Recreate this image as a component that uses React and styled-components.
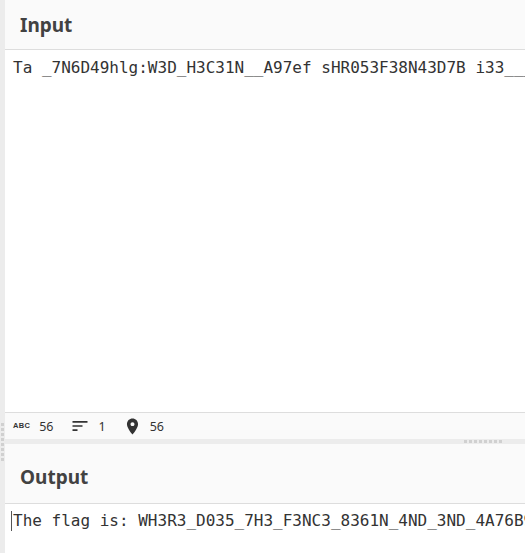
import React from 'react';
import styled, { createGlobalStyle } from 'styled-components';

const Global = createGlobalStyle`
  html, body {
    margin: 0;
    padding: 0;
    overflow: hidden;
    background: #fff;
  }
`

const Page = styled.div`
  display: flex;
  height: 553px;
  width: 525px;
  overflow: hidden;
`

const Gutter = styled.div`
  width: 5px;
  flex-shrink: 0;
  background: #ececec;
  display: flex;
  flex-direction: column;
  align-items: center;
  gap: 2px;
  padding-top: 423px;
  box-sizing: border-box;
`

const Dot = styled.span`
  display: block;
  width: 3px;
  height: 3px;
  background: #d0d0d0;
`

const Main = styled.div`
  flex: 1;
  display: flex;
  flex-direction: column;
  min-width: 0;
`

const Header = styled.div`
  height: ${p => p.$h}px;
  flex-shrink: 0;
  background: #fafafa;
  border-bottom: 1px solid #dddddd;
  display: flex;
  align-items: center;
  padding: ${p => p.$pt}px 15px 0;
  box-sizing: content-box;
`

const Title = styled.h2`
  margin: 0;
  font-family: "Noto Sans", "Open Sans", sans-serif;
  font-weight: 700;
  font-size: 19px;
  color: #424242;
`

const TextArea = styled.div`
  flex: ${p => (p.$grow ? 1 : 'none')};
  background: #fff;
  padding: ${p => p.$pt}px 0 0 ${p => p.$pl}px;
  font-family: "DejaVu Sans Mono", "Liberation Mono", monospace;
  font-size: 16px;
  line-height: 20px;
  color: #333;
  white-space: pre;
  overflow: hidden;
`

const Caret = styled.span`
  display: inline-block;
  width: 1px;
  height: 20px;
  background: #555;
  vertical-align: top;
  margin-right: 1px;
`

const StatusBar = styled.div`
  height: 26px;
  flex-shrink: 0;
  border-top: 1px solid #dddddd;
  background: #fafafa;
  display: flex;
  align-items: center;
  gap: 17px;
  padding-left: 8px;
  font-family: "Noto Sans", "Open Sans", sans-serif;
  font-size: 12.5px;
  color: #333;
`

const Stat = styled.div`
  display: flex;
  align-items: center;
  gap: ${p => p.$gap}px;
`

const AbcMark = styled.span`
  font-family: "Liberation Sans", Arial, sans-serif;
  font-weight: 900;
  font-size: 7.5px;
  letter-spacing: 0.3px;
  color: #333;
  line-height: 1;
`

const Splitter = styled.div`
  height: 5px;
  flex-shrink: 0;
  background: #ececec;
  display: flex;
  justify-content: flex-end;
  align-items: center;
  gap: 2px;
  padding-right: 23px;
`

const SortIcon = () => (
  <svg width="20" height="20" viewBox="0 0 24 24" fill="#333">
    <path d="M3 18h6v-2H3v2zM3 6v2h18V6H3zm0 7h12v-2H3v2z" />
  </svg>
)

const PinIcon = () => (
  <svg width="19" height="19" viewBox="0 0 24 24" fill="#333">
    <path d="M12 2C8.13 2 5 5.13 5 9c0 5.25 7 13 7 13s7-7.75 7-13c0-3.87-3.13-7-7-7zm0 9.5c-1.38 0-2.5-1.12-2.5-2.5s1.12-2.5 2.5-2.5 2.5 1.12 2.5 2.5-1.12 2.5-2.5 2.5z" />
  </svg>
)

const dots = Array.from({ length: 8 })

const App = () => {
  return (
    <>
      <Global />
      <Page>
        <Gutter>
          {dots.map((_, i) => <Dot key={i} />)}
        </Gutter>
        <Main>
          <Header $h={49} $pt={0}>
            <Title>Input</Title>
          </Header>
          <TextArea $grow $pt={8} $pl={8}>
            Ta _7N6D49hlg:W3D_H3C31N__A97ef sHR053F38N43D7B i33___
          </TextArea>
          <StatusBar>
            <Stat $gap={9}>
              <AbcMark>ABC</AbcMark>
              <span>56</span>
            </Stat>
            <Stat $gap={8}>
              <SortIcon />
              <span>1</span>
            </Stat>
            <Stat $gap={8}>
              <PinIcon />
              <span>56</span>
            </Stat>
          </StatusBar>
          <Splitter>
            {dots.map((_, i) => <Dot key={i} />)}
          </Splitter>
          <Header $h={52} $pt={7}>
            <Title>Output</Title>
          </Header>
          <TextArea $pt={7} $pl={6} style={{ height: 42 }}>
            <Caret />The flag is: WH3R3_D035_7H3_F3NC3_8361N_4ND_3ND_4A76B9
          </TextArea>
        </Main>
      </Page>
    </>
  )
}

export default App;
